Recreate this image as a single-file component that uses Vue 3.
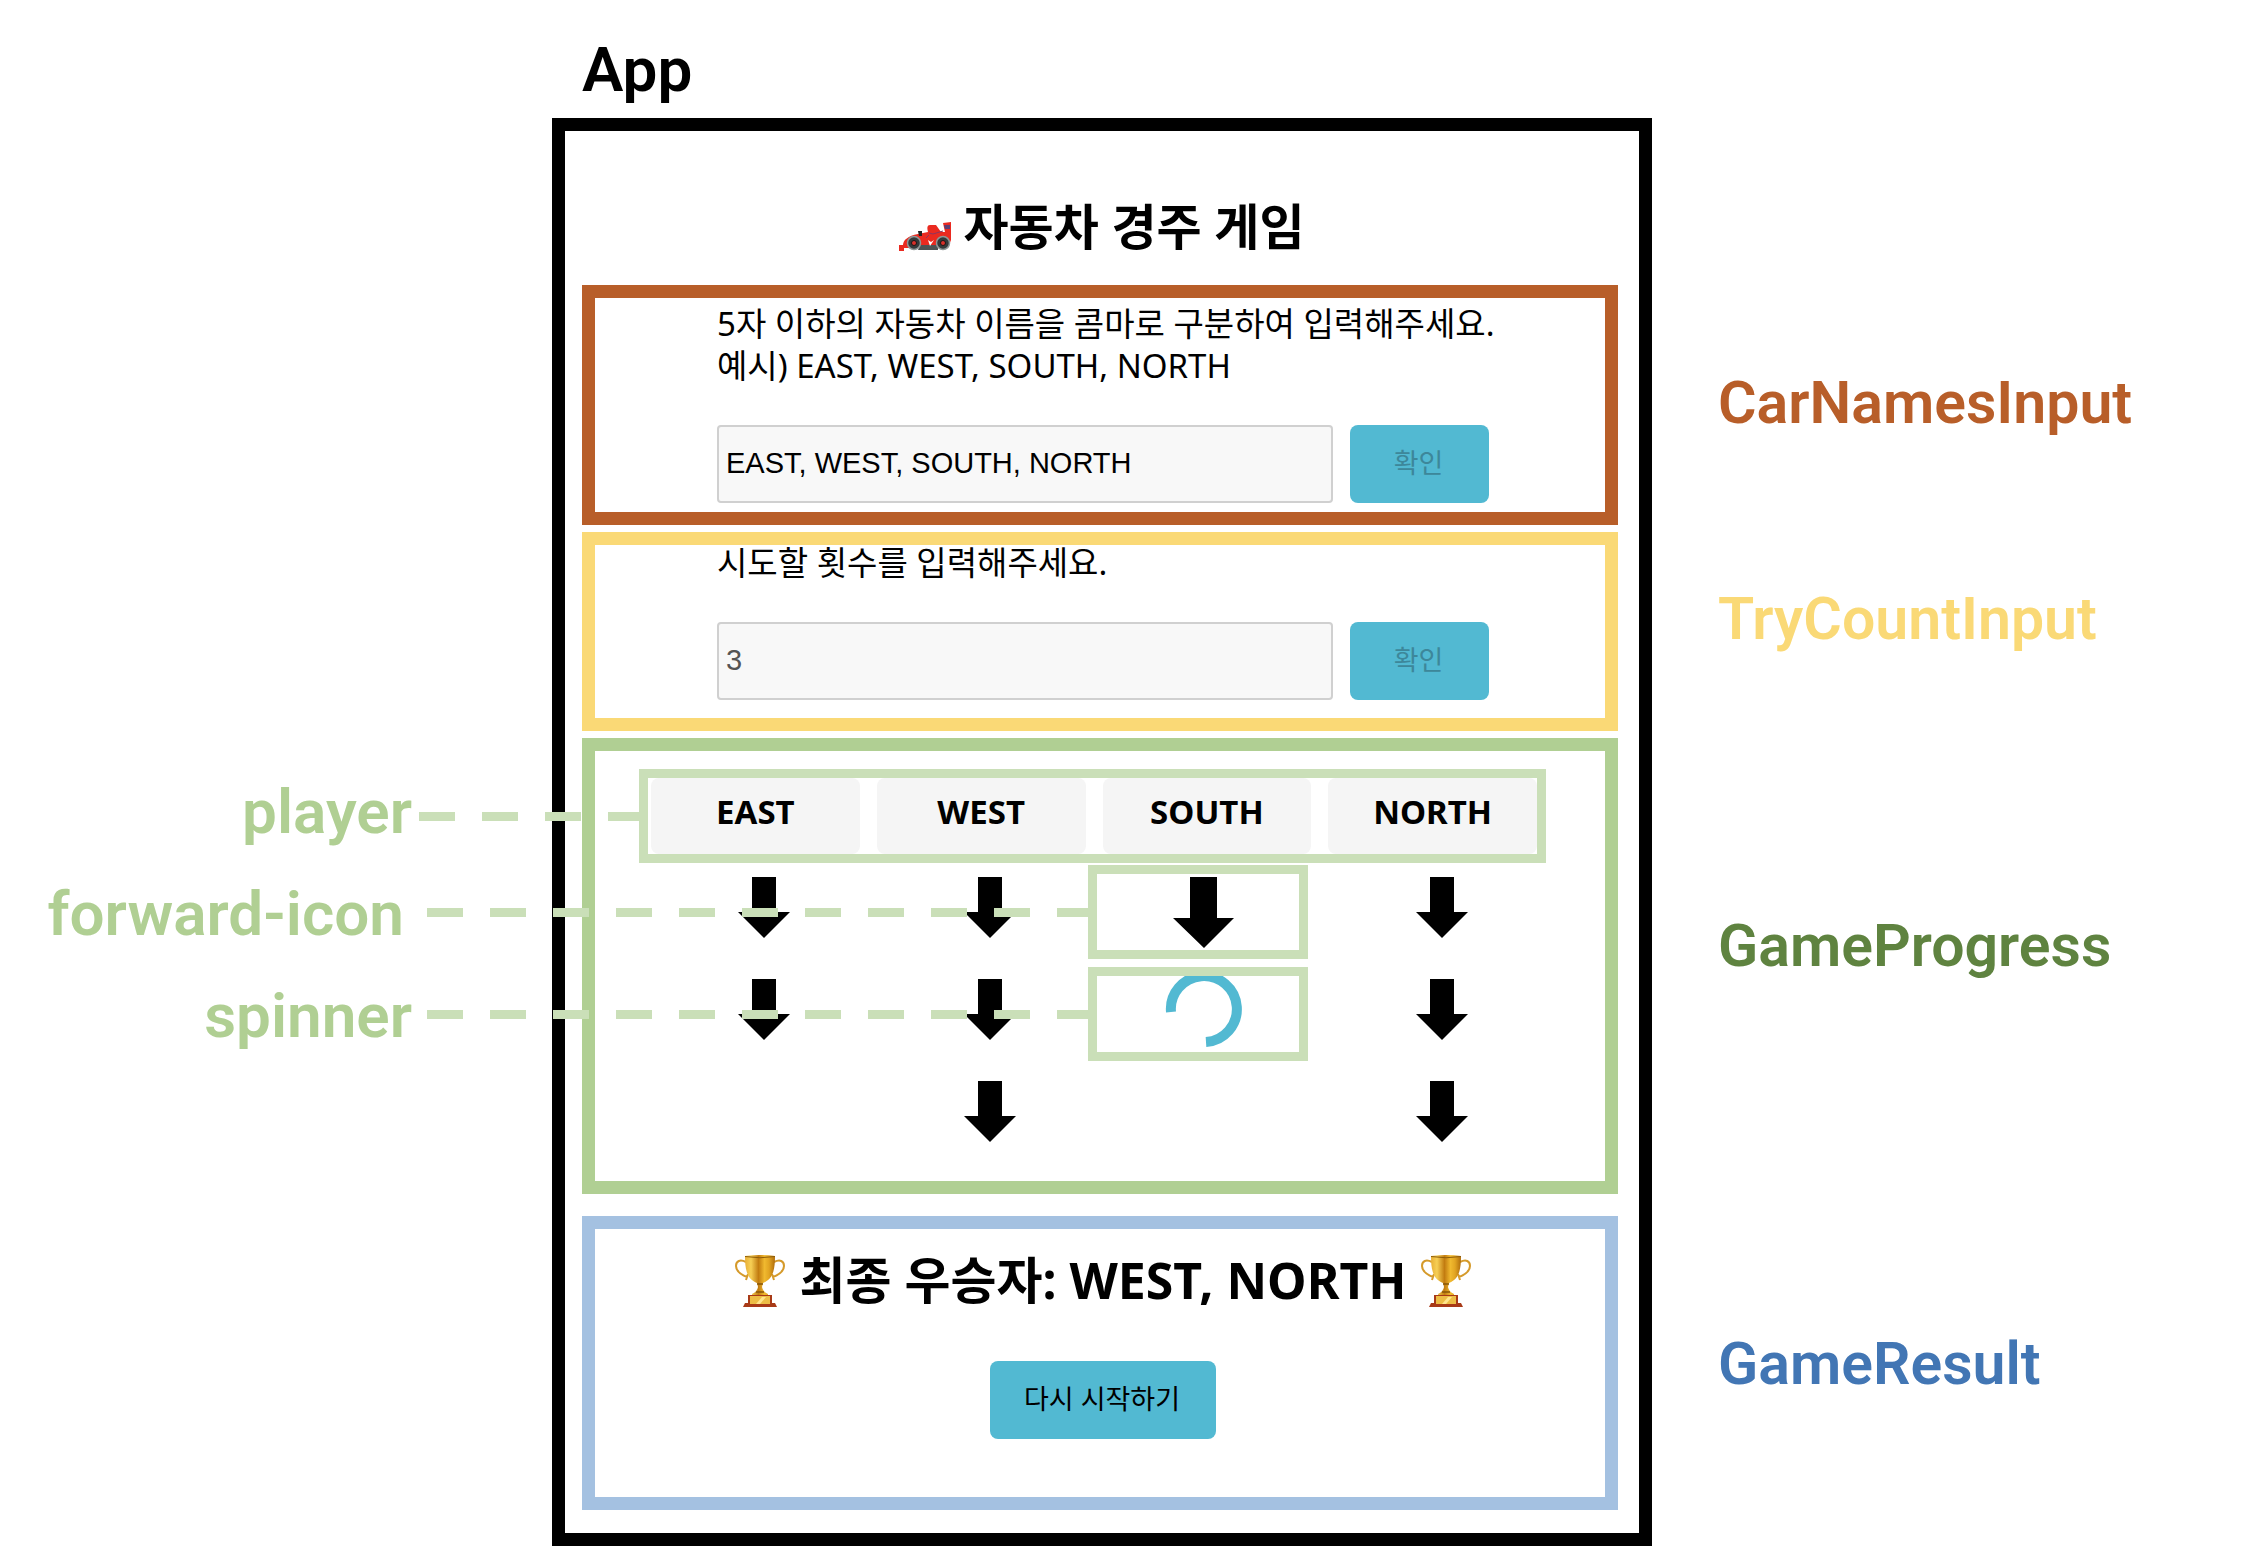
<script setup>
import { ref } from 'vue'

const carNames = ref('EAST, WEST, SOUTH, NORTH')
const tryCount = ref('3')

const players = ['EAST', 'WEST', 'SOUTH', 'NORTH']
const rounds = [
  ['arrow', 'arrow', 'marked-arrow', 'arrow'],
  ['arrow', 'arrow', 'marked-spinner', 'arrow'],
  ['', 'arrow', '', 'arrow'],
]
</script>

<template>
  <main class="diagram">
    <svg class="defs" width="0" height="0" aria-hidden="true">
      <defs>
        <linearGradient id="gold" x1="0" x2="1" y1="0" y2="0">
          <stop offset="0" stop-color="#e9b036" />
          <stop offset="0.2" stop-color="#f6cf55" />
          <stop offset="0.45" stop-color="#c27c10" />
          <stop offset="0.65" stop-color="#f0b92f" />
          <stop offset="0.8" stop-color="#e2a522" />
          <stop offset="1" stop-color="#b06d0c" />
        </linearGradient>
        <symbol id="trophy" viewBox="0 0 50 52">
          <g fill="none" stroke="#d59a2a" stroke-width="2">
            <path d="M11 7C5 4 1 6 1 11c0 6 6 9 11 11l1-3M12 22l-1 3" />
            <path d="M39 7c6-3 10-1 10 4 0 6-6 9-11 11l-1-3M38 22l1 3" />
          </g>
          <path fill="url(#gold)" d="M10 1Q25-1 40 1C40 15 38 24 28 28L27 32Q28 37 33 39V41H17V39Q22 37 23 32L22 28C12 24 10 15 10 1Z" />
          <path d="M10 1.500Q25 4 40 1.500" fill="none" stroke="#8d5d0a" />
          <path d="M22 29h6M21 37h8" stroke="#875609" stroke-width="1.500" />
          <path d="M13 40h24v8h3l2 4H8l2-4h3Z" fill="#a83a17" />
          <path d="M15 41h20v8H15Z" fill="#edbd45" />
          <path d="m21 49 6-7h4l-6 7Z" fill="#ffe58b" />
        </symbol>
      </defs>
    </svg>

    <h2 class="tag tag-app">App</h2>
    <div class="frame"></div>

    <h1 class="title">
      <svg class="car" viewBox="0 0 52 29" aria-hidden="true">
        <path d="M0 29v-6h4c0-5 5-9 15-11l10-2c-1-4-1-7 2-7h6l5 7h4L44 1l8-1v18l-3 8H5v3Z" fill="#ea2a20" />
        <path d="M21 23h18v5H19Z" fill="#4d5354" />
        <path d="M45 3h6v4h-5Z" fill="#5b3f75" />
        <path d="m30 11 4 1 10-3M27 16l3-3" fill="none" stroke="#8c3560" />
        <path d="M19 9h4v5h-3Z" fill="#222" />
        <path d="m29 18 3 2 3-2-4 6Z" fill="#fff" />
        <g fill="#343a3b" stroke="#909797" stroke-width="1.500">
          <circle cx="15" cy="21" r="6.500" />
          <circle cx="44" cy="21" r="6.500" />
        </g>
        <g fill="#d9302a" stroke="#171717">
          <circle cx="15" cy="21" r="2.500" />
          <circle cx="44" cy="21" r="2.500" />
        </g>
      </svg>
      <span>자동차 경주 게임</span>
    </h1>

    <section class="panel panel-cars">
      <form class="form" @submit.prevent>
        <label for="car-names">5자 이하의 자동차 이름을 콤마로 구분하여 입력해주세요.<br />예시) EAST, WEST, SOUTH, NORTH</label>
        <div class="field">
          <input id="car-names" v-model="carNames" type="text" />
          <button type="submit" disabled>확인</button>
        </div>
      </form>
    </section>
    <h2 class="tag tag-cars">CarNamesInput</h2>

    <section class="panel panel-tries">
      <form class="form" @submit.prevent>
        <label for="try-count">시도할 횟수를 입력해주세요.</label>
        <div class="field">
          <input id="try-count" v-model="tryCount" class="muted" type="text" />
          <button type="submit" disabled>확인</button>
        </div>
      </form>
    </section>
    <h2 class="tag tag-tries">TryCountInput</h2>

    <div class="callouts">
      <span>player</span>
      <span class="spaced">forward-icon</span>
      <span>spinner</span>
    </div>

    <section class="panel panel-progress">
      <div class="marked players">
        <div v-for="name in players" :key="name" class="player">{{ name }}</div>
      </div>
      <div v-for="(round, r) in rounds" :key="r" class="round">
        <div v-for="(cell, c) in round" :key="c" class="cell">
          <svg v-if="cell === 'arrow'" class="arrow" viewBox="0 0 52 62">
            <path d="M14 0h24v35h14L26 61 0 35h14Z" />
          </svg>
          <div v-else-if="cell" class="marked spot">
            <svg v-if="cell === 'marked-arrow'" viewBox="0 0 202 76">
              <path d="M93 3h27v41h17l-30 30-31-30h17Z" />
            </svg>
            <svg v-else viewBox="0 0 202 76">
              <path d="M74 36A33 33 0 1 1 109 66" fill="none" stroke="#52b9d2" stroke-width="10" />
            </svg>
          </div>
        </div>
      </div>
    </section>
    <h2 class="tag tag-progress">GameProgress</h2>

    <section class="panel panel-result">
      <h2 class="winner">
        <svg class="trophy" aria-hidden="true"><use href="#trophy" /></svg>
        <span>최종 우승자: WEST, NORTH</span>
        <svg class="trophy" aria-hidden="true"><use href="#trophy" /></svg>
      </h2>
      <button class="restart" type="button">다시 시작하기</button>
    </section>
    <h2 class="tag tag-result">GameResult</h2>
  </main>
</template>

<style>
body {
  background: #fff;
}
</style>

<style scoped>
* {
  box-sizing: border-box;
}

.diagram {
  display: grid;
  grid-template-columns: minmax(0, 552fr) minmax(0, 1100fr) minmax(0, 612fr);
  grid-template-rows: 118px 167px auto auto auto auto 36px;
  padding-bottom: 22px;
  color: #000;
  font-family: "Noto Sans", "Noto Sans CJK KR", sans-serif;
}

.defs {
  position: absolute;
}

h1,
h2 {
  margin: 0;
}

.frame {
  grid-area: 2 / 2 / 8 / 3;
  border: 13px solid #000;
}

.tag {
  grid-column: 3;
  padding-left: 66px;
  font: 600 59px/64px Roboto, sans-serif;
}

.tag-app {
  grid-area: 1 / 2;
  padding: 38px 0 0 30px;
  font-size: 62px;
}

.tag-cars {
  grid-row: 3;
  padding-top: 86px;
  color: #b85e29;
}

.tag-tries {
  grid-row: 4;
  padding-top: 55px;
  color: #fad976;
}

.tag-progress {
  grid-row: 5;
  padding-top: 176px;
  color: #5f8340;
}

.tag-result {
  grid-row: 6;
  padding-top: 116px;
  color: #4276b4;
}

.title {
  grid-area: 2 / 2;
  display: flex;
  justify-content: center;
  gap: 12px;
  padding-top: 73px;
  font-size: 49px;
  line-height: 70px;
}

.car {
  width: 52px;
  height: 29px;
  margin-top: 31px;
}

.panel {
  grid-column: 2;
  margin: 0 34px 0 30px;
  border: 13px solid;
}

.panel-cars {
  grid-row: 3;
  margin-bottom: 7px;
  padding: 5px 116px 9px 122px;
  border-color: #b85e29;
}

.panel-tries {
  grid-row: 4;
  margin-bottom: 7px;
  padding: 0 116px 18px 122px;
  border-color: #fad976;
}

.form label {
  display: block;
  margin-bottom: 38px;
  font-size: 33px;
  line-height: 42px;
  white-space: nowrap;
}

.panel-tries label {
  margin-top: -3px;
}

.field {
  display: flex;
  gap: 17px;
}

.field input {
  flex: 1;
  min-width: 0;
  height: 78px;
  padding: 0 7px 2px;
  border: 2px solid #d0d0d0;
  border-radius: 4px;
  background: #f8f8f8;
  color: #000;
  font: 29px "Liberation Sans", sans-serif;
}

.field .muted {
  color: #545454;
}

button {
  width: 139px;
  height: 78px;
  padding: 0 2px 5px 0;
  border: 0;
  border-radius: 8px;
  background: #52b9d2;
  color: #000;
  font: 27px "Noto Sans", "Noto Sans CJK KR", sans-serif;
}

button:disabled {
  color: #3d879a;
}

.callouts {
  grid-area: 5 / 1;
  display: flex;
  flex-direction: column;
  padding: 23px 140px 0 0;
  color: #b0cf93;
  font: 600 62px/102px Roboto, sans-serif;
  text-align: right;
}

.callouts .spaced {
  padding-right: 8px;
}

.panel-progress {
  grid-row: 5;
  margin-bottom: 22px;
  padding: 18px 59px 12px 44px;
  border-color: #b0cf93;
}

.marked {
  position: relative;
  border: 9px solid #cadfb8;
}

.marked::before {
  content: "";
  position: absolute;
  top: 34px;
  right: calc(100% + 9px);
  width: 661px;
  height: 9px;
  background: repeating-linear-gradient(to right, #cadfb8 0 36px, transparent 36px 63px);
}

.players {
  display: grid;
  grid-template-columns: repeat(4, 1fr);
  gap: 17px;
  padding-left: 3px;
}

.players::before {
  width: 220px;
}

.player {
  height: 76px;
  border-radius: 8px;
  background: #f5f5f5;
  font-size: 33px;
  font-weight: 700;
  line-height: 68px;
  text-align: center;
}

.round {
  display: grid;
  grid-template-columns: repeat(4, 1fr);
  gap: 17px;
  height: 102px;
  padding-left: 20px;
}

.cell {
  position: relative;
  padding-top: 14px;
  text-align: center;
}

.arrow {
  width: 52px;
  height: 62px;
}

.spot {
  position: absolute;
  top: 2px;
  left: -23px;
  width: 220px;
  height: 94px;
}

.spot svg {
  display: block;
  width: 100%;
  height: 100%;
}

.panel-result {
  grid-row: 6;
  display: flex;
  flex-direction: column;
  align-items: center;
  padding: 16px 0 58px 6px;
  border-color: #a4c1e1;
}

.winner {
  display: flex;
  gap: 14px;
  margin-bottom: 46px;
  font-size: 50px;
  line-height: 70px;
}

.trophy {
  width: 50px;
  height: 52px;
  margin-top: 10px;
}

.restart {
  width: 226px;
}
</style>
